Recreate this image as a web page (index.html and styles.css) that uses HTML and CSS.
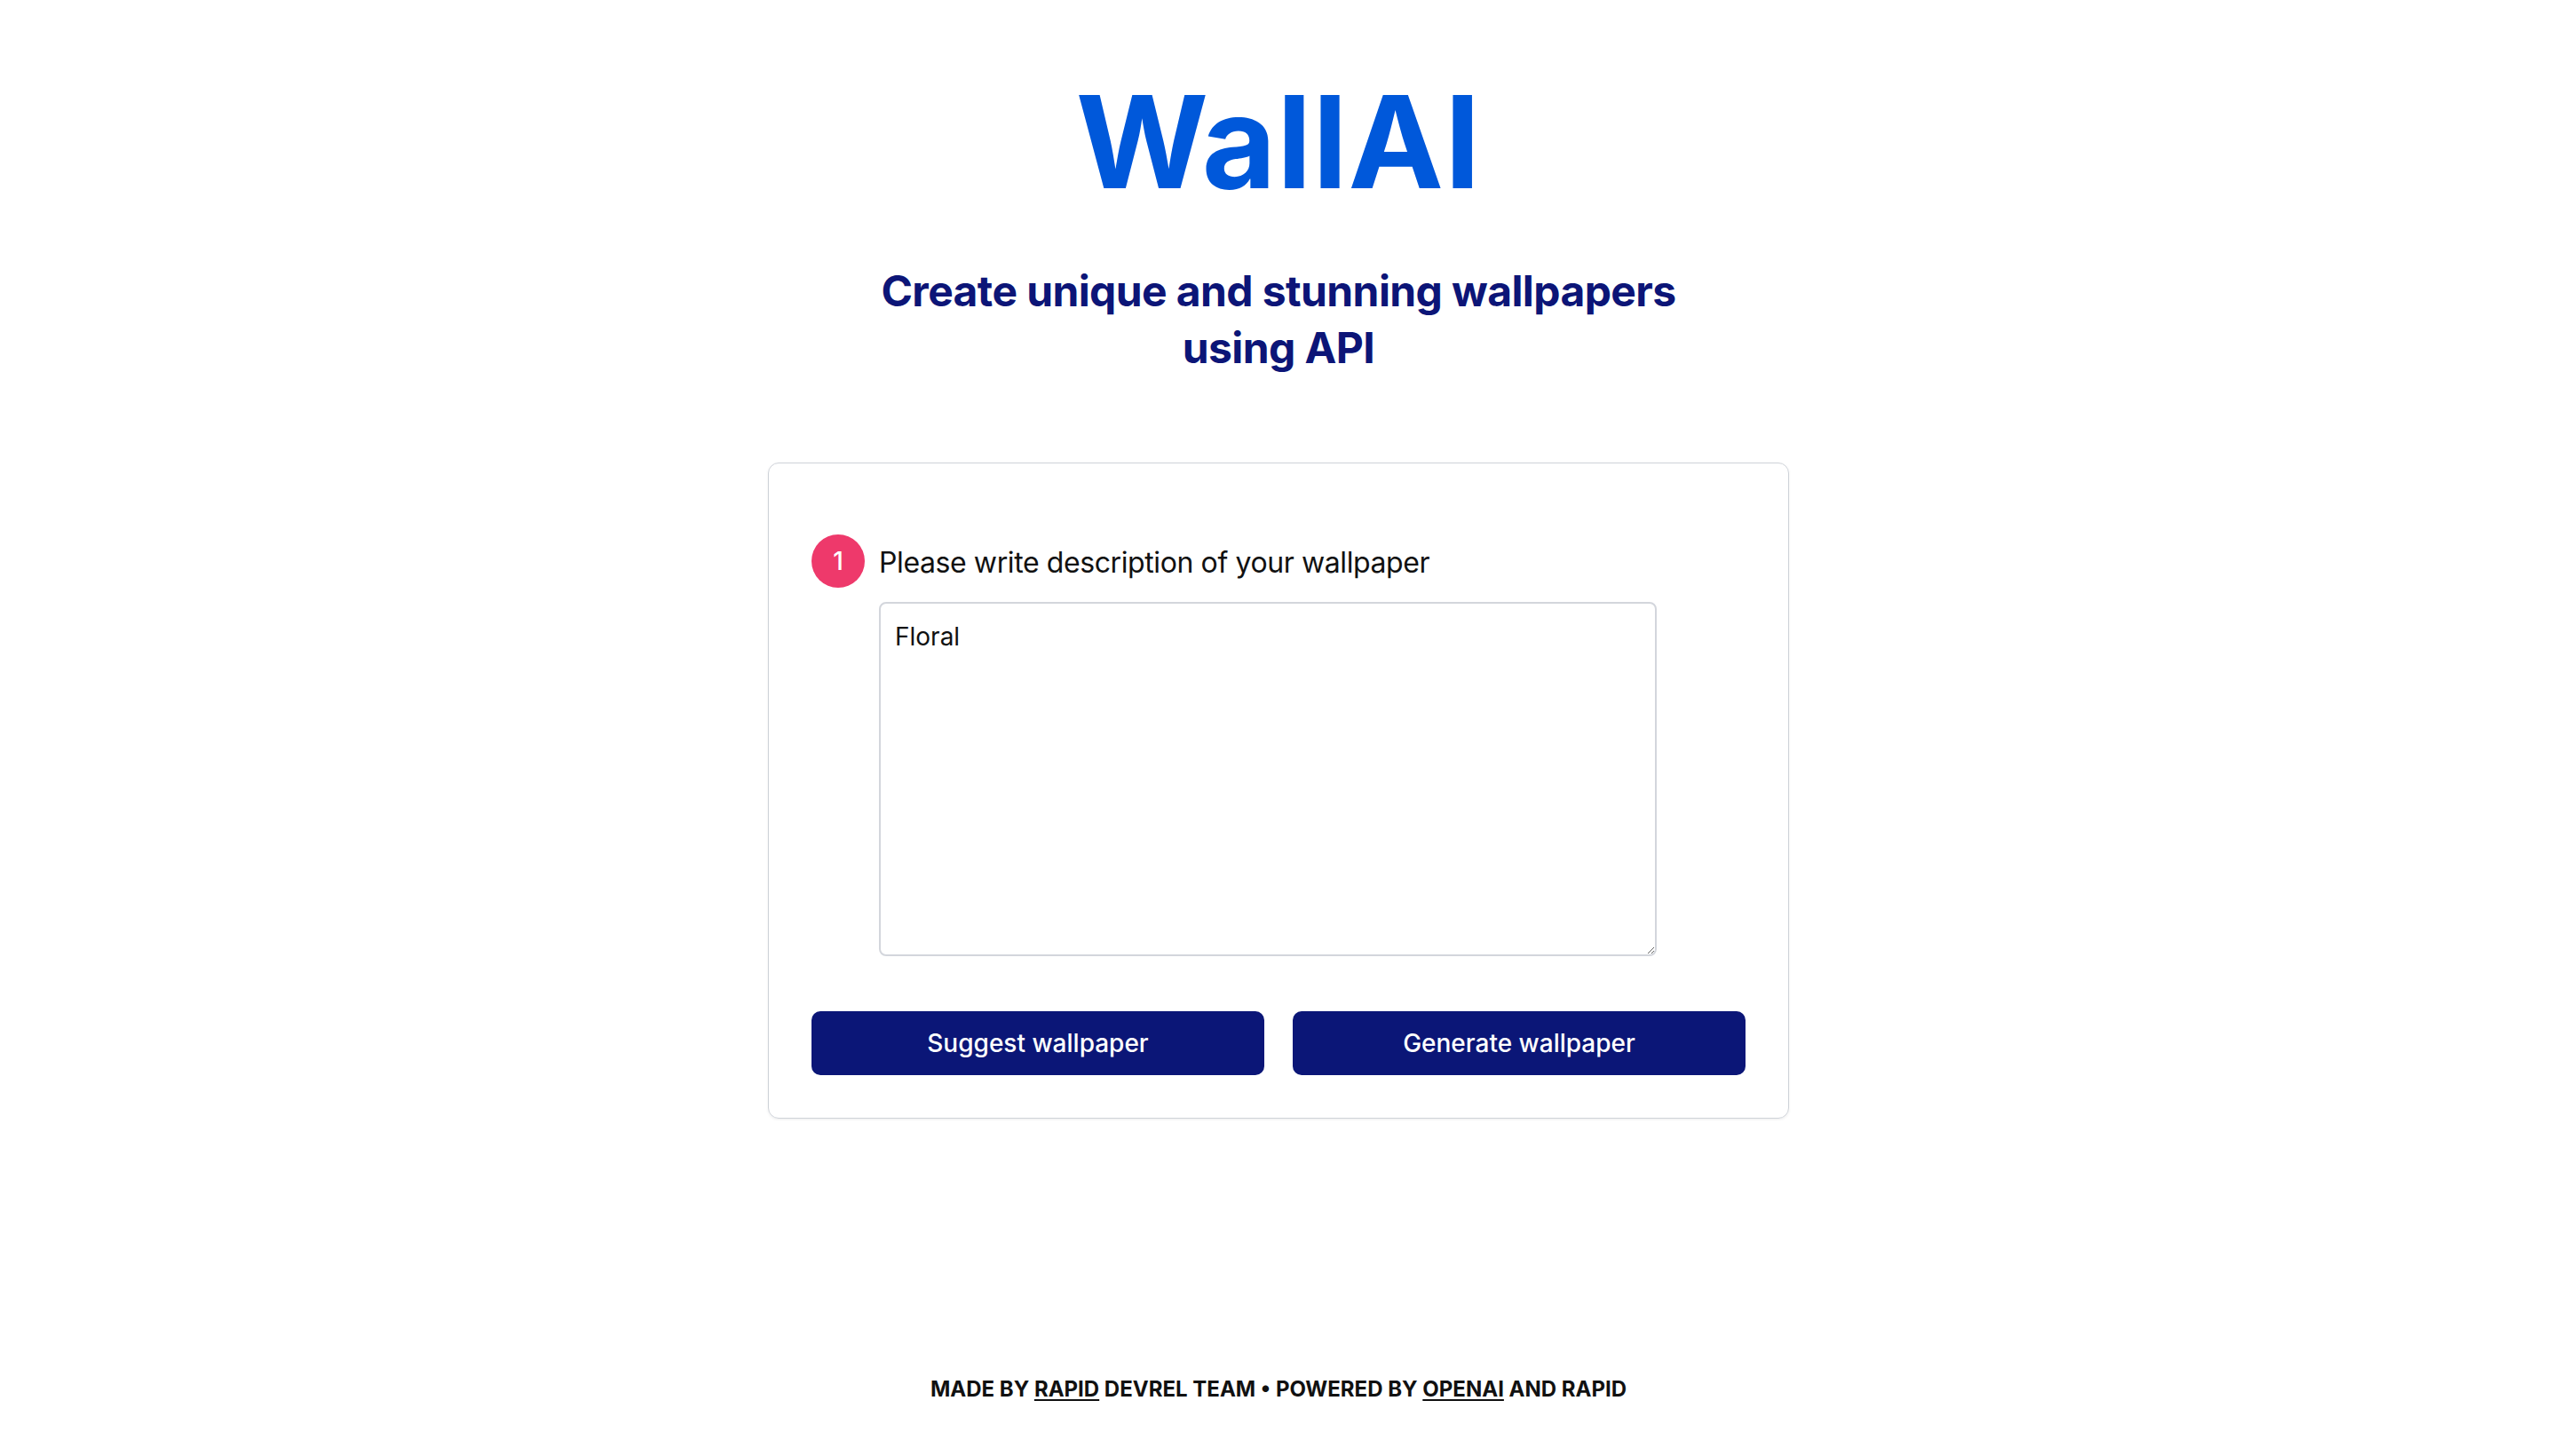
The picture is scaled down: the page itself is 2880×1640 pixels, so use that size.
FILE: index.html
```html
<!DOCTYPE html>
<html lang="en">
<head>
<meta charset="utf-8">
<title>WallAI</title>
<link rel="stylesheet" href="styles.css">
</head>
<body>
<div class="page">
  <header class="hero">
    <h1 class="title">WallAI</h1>
    <p class="subtitle">Create unique and stunning wallpapers<br>using API</p>
  </header>
  <main class="card">
    <div class="step">
      <span class="step-num">1</span>
      <label class="step-label" for="desc">Please write description of your wallpaper</label>
    </div>
    <textarea id="desc" class="desc">Floral</textarea>
    <div class="actions">
      <button class="btn">Suggest wallpaper</button>
      <button class="btn">Generate wallpaper</button>
    </div>
  </main>
  <footer class="footer">
    Made by <a href="#">Rapid</a> DevRel Team &bull; Powered by <a href="#">OpenAI</a> and Rapid
  </footer>
</div>
</body>
</html>
```

FILE: styles.css
```css
* { box-sizing: border-box; }

html, body {
  margin: 0;
  padding: 0;
  background: #ffffff;
}

body {
  font-family: Inter, "Noto Sans", sans-serif;
  color: #111111;
}

.page {
  min-height: 100vh;
  display: flex;
  flex-direction: column;
  align-items: center;
}

.hero {
  display: flex;
  flex-direction: column;
  align-items: center;
  padding-top: 88px;
}

.title {
  margin: 0;
  font-size: 144px;
  line-height: 144px;
  font-weight: 700;
  color: #0058da;
  letter-spacing: 1px;
}

.subtitle {
  margin: 64px 0 0;
  font-size: 48px;
  line-height: 64px;
  font-weight: 700;
  color: #0c1577;
  text-align: center;
  letter-spacing: -0.6px;
}

.card {
  margin-top: 97px;
  width: 1150px;
  border: 1px solid #cfd3d9;
  border-radius: 12px;
  box-shadow: 0 1px 3px rgba(0, 0, 0, 0.08);
  padding: 80px 48px 48px;
  display: flex;
  flex-direction: column;
}

.step {
  display: flex;
  align-items: center;
  gap: 16px;
}

.step-num {
  width: 60px;
  height: 60px;
  border-radius: 50%;
  background: #ee396b;
  color: #ffffff;
  display: flex;
  align-items: center;
  justify-content: center;
  font-size: 28px;
  font-weight: 500;
}

.step-label {
  padding-top: 3px;
  font-size: 32px;
  line-height: 48px;
  font-weight: 400;
  color: #111111;
  letter-spacing: -0.4px;
}

.desc {
  margin: 16px 0 0 76px;
  width: 876px;
  height: 399px;
  border: 2px solid #d3d6dc;
  border-radius: 8px;
  padding: 16px;
  font-family: Inter, "Noto Sans", sans-serif;
  font-size: 28px;
  line-height: 42px;
  color: #111111;
  resize: vertical;
  outline: none;
}

.actions {
  margin-top: 62px;
  display: grid;
  grid-template-columns: 1fr 1fr;
  gap: 32px;
}

.btn {
  height: 72px;
  border: none;
  border-radius: 10px;
  background: #0b1677;
  color: #ffffff;
  font-family: Inter, "Noto Sans", sans-serif;
  font-size: 28px;
  font-weight: 500;
  cursor: pointer;
}

.footer {
  margin-top: auto;
  padding-bottom: 57px;
  font-size: 24px;
  line-height: 36px;
  font-weight: 700;
  text-transform: uppercase;
  color: #111111;
}

.footer a {
  color: inherit;
  text-decoration: underline;
  text-underline-offset: 3px;
}
```
